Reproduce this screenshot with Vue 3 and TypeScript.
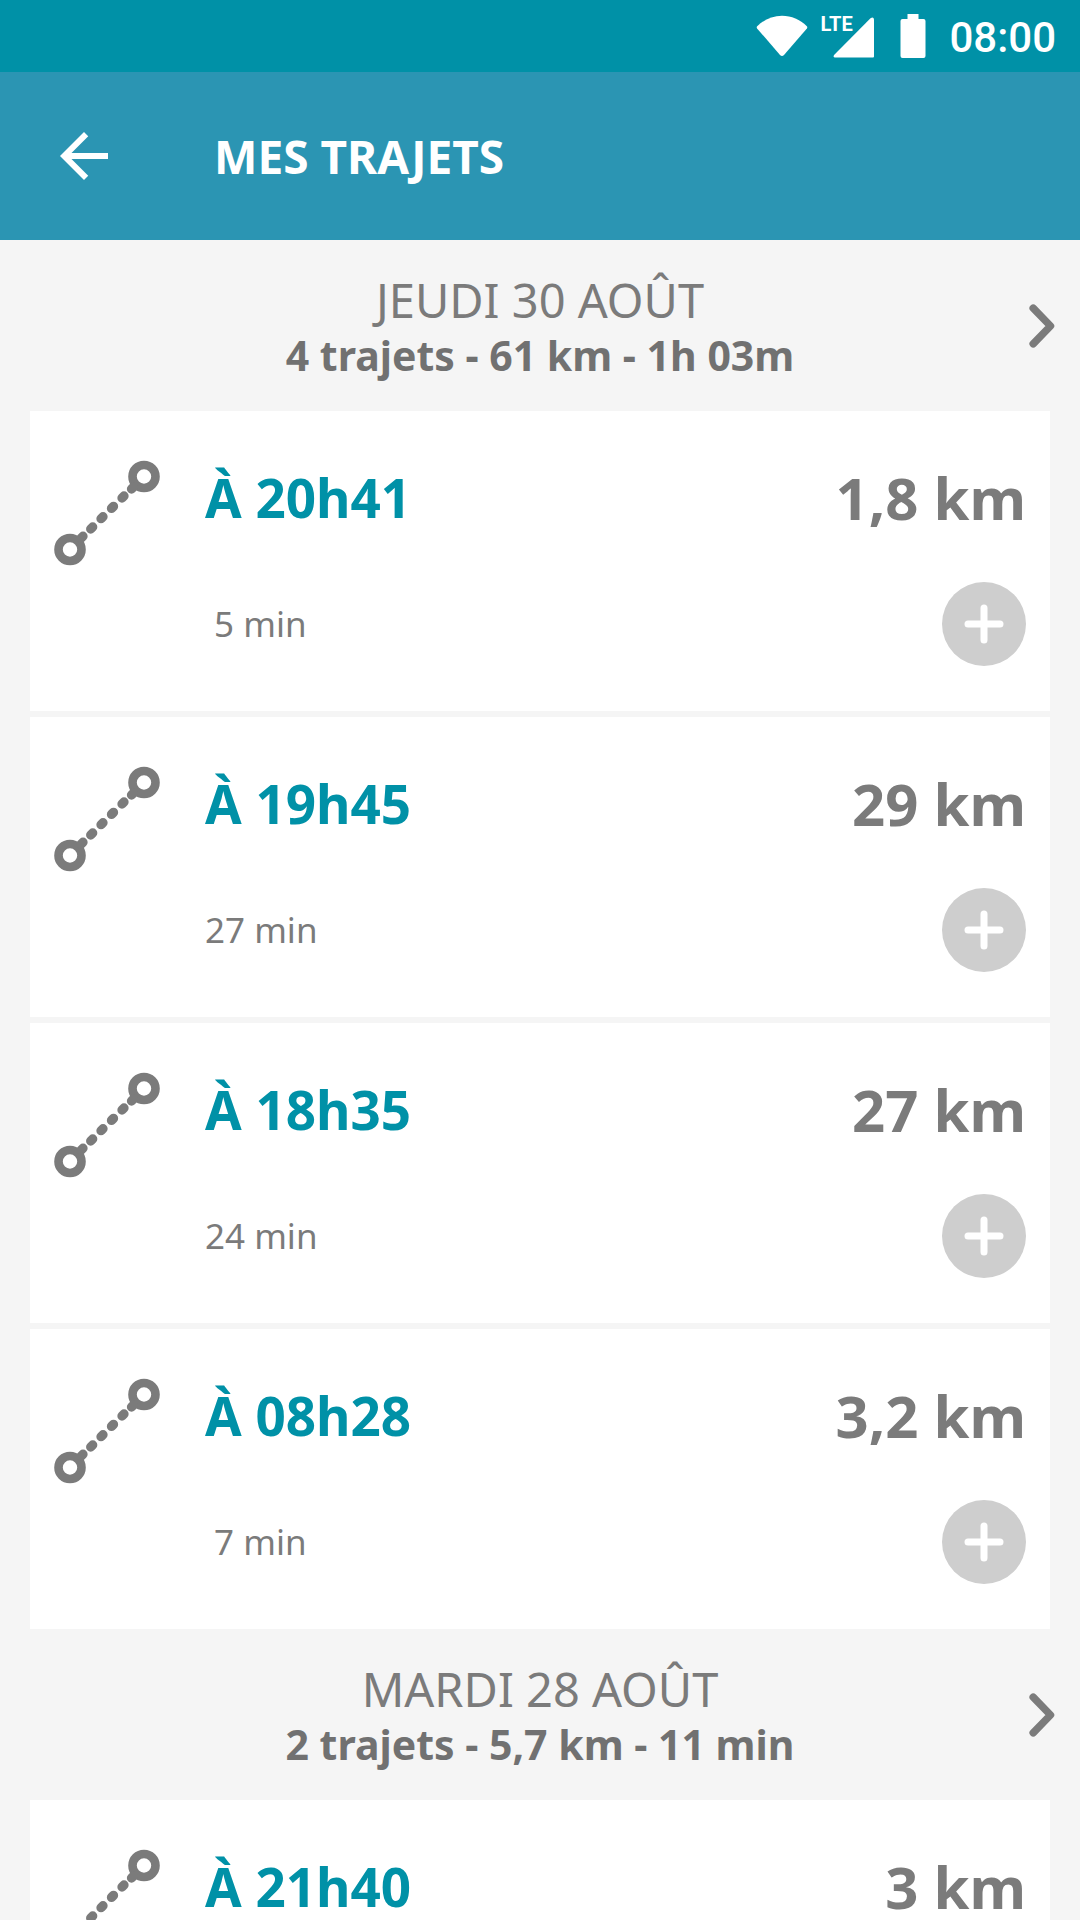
<script setup lang="ts">
interface Trip {
  time: string
  distance: string
  duration: string
}

interface Day {
  label: string
  summary: string
  trips: Trip[]
}

const days: Day[] = [
  {
    label: 'JEUDI 30 AOÛT',
    summary: '4 trajets - 61 km - 1h 03m',
    trips: [
      { time: 'À 20h41', distance: '1,8 km', duration: '5 min' },
      { time: 'À 19h45', distance: '29 km', duration: '27 min' },
      { time: 'À 18h35', distance: '27 km', duration: '24 min' },
      { time: 'À 08h28', distance: '3,2 km', duration: '7 min' },
    ],
  },
  {
    label: 'MARDI 28 AOÛT',
    summary: '2 trajets - 5,7 km - 11 min',
    trips: [{ time: 'À 21h40', distance: '3 km', duration: '6 min' }],
  },
]

// Single-digit minutes are padded with a leading space
const padDuration = (duration: string): string => duration.padStart(6, ' ')
</script>

<template>
  <div class="screen">
    <div class="status-bar">
      <svg class="wifi" width="52" height="42" viewBox="0 0 52 42" aria-hidden="true">
        <path d="M1.2 11.2C8 4.5 16.5 0.8 26 0.8S44 4.5 50.8 11.2Q51.8 12.2 50.9 13.4L28 40Q26 42 24 40L1.1 13.4Q0.2 12.2 1.2 11.2Z" fill="#fff" />
      </svg>
      <span class="network">
        <svg width="54" height="44" viewBox="0 0 54 44" aria-hidden="true">
          <path d="M15 43.5Q12.5 43 14.3 40.7L50.5 4.3Q53.5 2.5 54 5.3V42.5Q54 43.5 53 43.5Z" fill="#fff" />
        </svg>
        <span class="network-label">LTE</span>
      </span>
      <svg class="battery" width="26" height="44" viewBox="0 0 26 44" aria-hidden="true">
        <path d="M7.5 0H18.5V5H23.5Q25.5 5 25.5 7V42Q25.5 44 23.5 44H2.5Q0.5 44 0.5 42V7Q0.5 5 2.5 5H7.5Z" fill="#fff" />
      </svg>
      <span class="clock">08:00</span>
    </div>

    <header class="app-bar">
      <button class="back" type="button" aria-label="Retour">
        <svg width="72" height="72" viewBox="0 0 24 24" aria-hidden="true">
          <path d="M20 11H7.83l5.59-5.59L12 4l-8 8 8 8 1.41-1.41L7.83 13H20z" fill="#fff" />
        </svg>
      </button>
      <h1>MES TRAJETS</h1>
    </header>

    <main class="days">
      <section v-for="day in days" :key="day.label">
        <button class="day-header" type="button">
          <span class="day-text">
            <span class="day-label">{{ day.label }}</span>
            <span class="day-summary">{{ day.summary }}</span>
          </span>
          <svg class="chevron" width="26" height="44" viewBox="0 0 26 44" aria-hidden="true">
            <path d="M4.2 4.2L21.5 22L4.2 39.8" fill="none" stroke="#7b7b7b" stroke-width="7.5" stroke-linecap="round" stroke-linejoin="round" />
          </svg>
        </button>

        <ul class="trips">
          <li v-for="trip in day.trips" :key="trip.time" class="trip">
            <svg class="route" width="106" height="116" viewBox="0 0 106 116" aria-hidden="true">
              <g fill="none" stroke="#7b7b7b" stroke-width="8.6">
                <circle cx="90" cy="21.5" r="11.5" />
                <circle cx="16" cy="94.5" r="11.5" />
                <path d="M79 32.5l-1.5 1.5M70 41l-2 2M59.5 51.4l-2 2M49 61.7l-2 2M38.700 72l-2 2M29 81.2l-2 2" stroke-width="9.3" stroke-linecap="round" />
              </g>
            </svg>
            <div class="trip-body">
              <div class="trip-row">
                <span class="time">{{ trip.time }}</span>
                <span class="distance">{{ trip.distance }}</span>
              </div>
              <div class="trip-row">
                <span class="duration">{{ padDuration(trip.duration) }}</span>
                <button class="add" type="button" aria-label="Ajouter">
                  <svg width="84" height="84" viewBox="0 0 84 84" aria-hidden="true">
                    <path d="M42 26V58M26 42H58" stroke="#fff" stroke-width="7" stroke-linecap="round" />
                  </svg>
                </button>
              </div>
            </div>
          </li>
        </ul>
      </section>
    </main>
  </div>
</template>

<style>
body {
  margin: 0;
  background: #f5f5f5;
}
</style>

<style scoped>
.screen {
  display: flex;
  flex-direction: column;
  height: 100vh;
  overflow: hidden;
  background: #f5f5f5;
  color: #7b7b7b;
  font-family: "Noto Sans", "Open Sans", sans-serif;
}

button {
  padding: 0;
  border: 0;
  background: none;
  color: inherit;
  font: inherit;
  cursor: pointer;
}

svg {
  display: block;
}

.status-bar {
  display: flex;
  flex: none;
  align-items: center;
  justify-content: flex-end;
  height: 72px;
  padding-right: 24px;
  background: #0091a7;
  color: #fff;
}

.wifi {
  margin-right: 12px;
}

.network {
  position: relative;
  margin-right: 26px;
}

.network-label {
  position: absolute;
  top: 0;
  left: 0;
  font: 700 20px/20px "Liberation Sans Narrow", "Roboto", sans-serif;
}

.battery {
  margin-right: 23px;
}

.clock {
  padding-top: 4px;
  font: 500 42px/68px "Roboto", sans-serif;
}

.app-bar {
  display: flex;
  flex: none;
  align-items: center;
  gap: 94px;
  height: 168px;
  padding: 0 48px;
  background: #2b95b3;
  color: #fff;
}

h1 {
  margin: 0;
  font-size: 46px;
  font-weight: 700;
  line-height: 60px;
}

.days {
  flex: 1;
  min-height: 0;
  overflow-y: auto;
  scrollbar-width: none;
}

.day-header {
  display: grid;
  grid-template-columns: 1fr auto 1fr;
  align-items: center;
  width: 100%;
  padding: 31px 25px 30px;
}

.day-text {
  display: flex;
  grid-column: 2;
  flex-direction: column;
  text-align: center;
}

.day-label {
  font-size: 47px;
  line-height: 58px;
}

.day-summary {
  color: #717171;
  font-size: 41px;
  font-weight: 700;
  line-height: 52px;
}

.chevron {
  justify-self: end;
}

.trips {
  display: flex;
  flex-direction: column;
  gap: 6px;
  margin: 0 30px;
  padding: 0;
  list-style: none;
}

.trip {
  display: flex;
  gap: 45px;
  padding: 44px 24px 45px;
  background: #fff;
}

.route {
  flex: none;
}

.trip-body {
  display: flex;
  flex: 1;
  flex-direction: column;
  gap: 43px;
}

.trip-row {
  display: flex;
  align-items: center;
  justify-content: space-between;
  height: 84px;
}

.time,
.distance {
  font-weight: 700;
}

.time {
  color: #0091a7;
  font-size: 53px;
}

.distance {
  font-size: 58px;
}

.duration {
  font-size: 35px;
  line-height: 46px;
  white-space: pre;
}

.add {
  border-radius: 50%;
  background: #cecece;
}
</style>
